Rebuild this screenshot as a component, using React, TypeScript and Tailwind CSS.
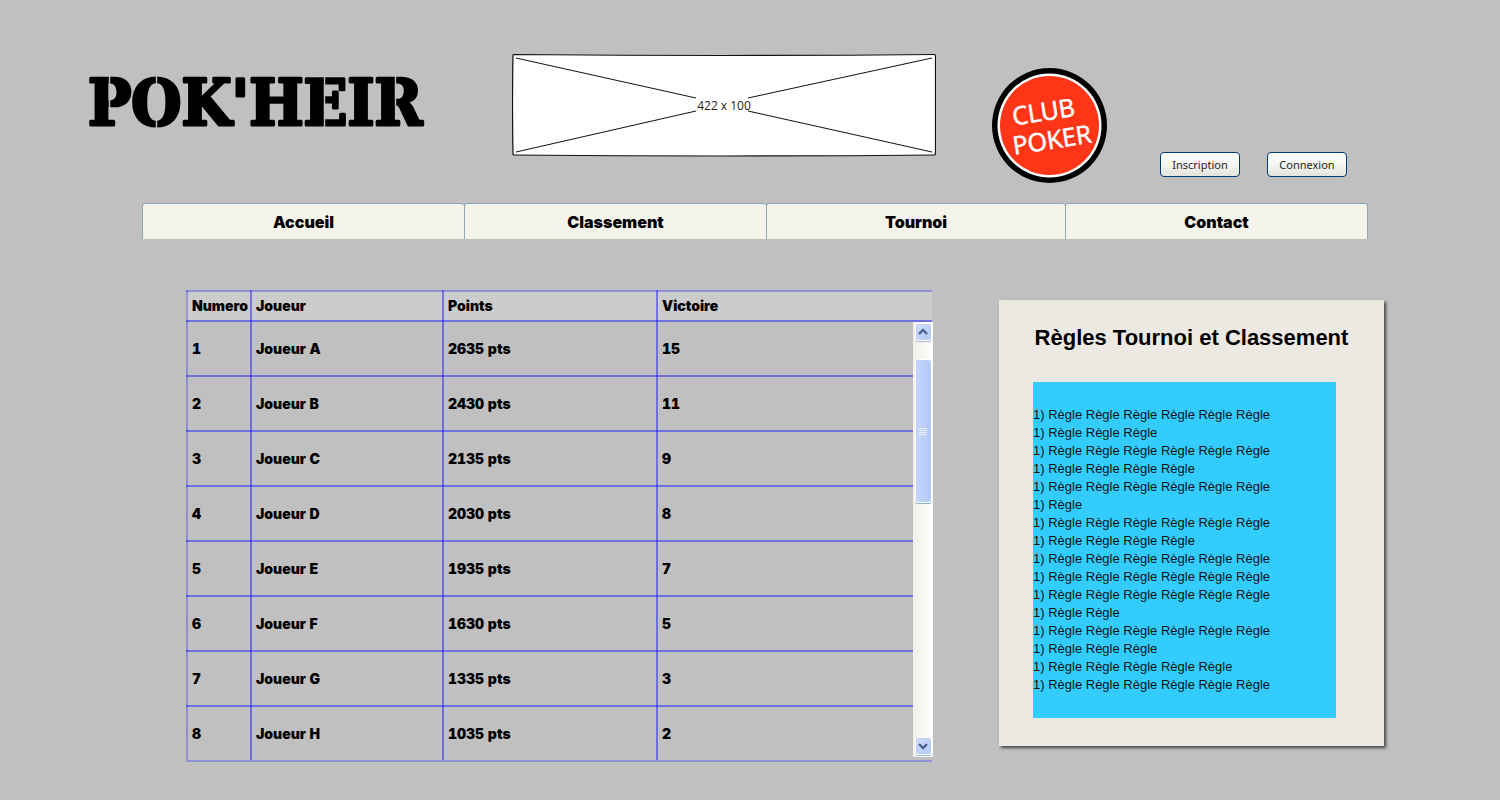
import React from "react";

const players = [
  { name: "Joueur A", points: 2635, wins: 15 },
  { name: "Joueur B", points: 2430, wins: 11 },
  { name: "Joueur C", points: 2135, wins: 9 },
  { name: "Joueur D", points: 2030, wins: 8 },
  { name: "Joueur E", points: 1935, wins: 7 },
  { name: "Joueur F", points: 1630, wins: 5 },
  { name: "Joueur G", points: 1335, wins: 3 },
  { name: "Joueur H", points: 1035, wins: 2 },
];

const ruleLengths = [6, 3, 6, 4, 6, 1, 6, 4, 6, 6, 6, 2, 6, 3, 5, 6];

const navItems = ["Accueil", "Classement", "Tournoi", "Contact"];

function Wordmark() {
  return (
    <svg width="344" height="80" viewBox="0 0 344 80" role="img" aria-label="POK'HEIR">
      <text
        x="0"
        y="65"
        stroke="#000"
        strokeWidth="3"
        strokeLinejoin="round"
        className="font-['DejaVu_Serif_Condensed','DejaVu_Serif',serif] text-[64px] font-bold"
      >
        POK'HEIR
      </text>
      {/* stencil cuts */}
      <path d="M21.5 14V50M68.5 14V68M236.5 14V68M307.5 14V46" stroke="#c0c0c0" strokeWidth="1.4" />
    </svg>
  );
}

function Banner() {
  return (
    <svg width="424" height="104" viewBox="0 0 424 104" role="img" aria-label="422 x 100">
      <path
        d="M2 1.5 Q212 3.5 422 1.5 Q423.5 1.5 423.5 3 L423.5 101 Q423.5 102 422 102 Q212 104 2 102 Q1 102 1 101 Q0 52 1 2.5 Q1 1.5 2 1.5 Z"
        fill="#fff"
        stroke="#111"
        strokeWidth="1.2"
      />
      <path d="M4 5 184 45 M236 45 420 5 M4 99 184 58 M236 58 420 99" stroke="#111" fill="none" />
      <text x="212" y="57" textAnchor="middle" className="fill-[#222] font-['Open_Sans',sans-serif] text-[12px]">
        422 x 100
      </text>
    </svg>
  );
}

function ClubLogo() {
  return (
    <svg width="116" height="116" viewBox="0 0 116 116" role="img" aria-label="Club Poker">
      <circle cx="57.5" cy="57.5" r="57.5" fill="#000" />
      <circle cx="57.5" cy="57.5" r="52" fill="#fff" />
      <circle cx="57.5" cy="57.5" r="49.5" fill="#ff3517" />
      <g
        transform="rotate(-9 57 57)"
        className="fill-white stroke-white font-['Open_Sans',sans-serif] text-[25px]"
        strokeWidth="0.6"
      >
        <text x="22" y="52">CLUB</text>
        <text x="18" y="81">POKER</text>
      </g>
    </svg>
  );
}

function HeaderButton({ children }: { children: React.ReactNode }) {
  return (
    <button
      type="button"
      className="h-[25px] w-20 rounded-[4px] border border-[#003c74] bg-linear-to-b from-white via-[#f6f6f2] to-[#e4e3db] font-['Noto_Sans',sans-serif] text-[11px] leading-4 text-[#222]"
    >
      {children}
    </button>
  );
}

function ScrollButton({ down = false }: { down?: boolean }) {
  return (
    <button
      type="button"
      aria-label={down ? "Descendre" : "Monter"}
      className="flex h-[18px] w-[17px] items-center justify-center rounded-[3px] border border-white bg-linear-to-br from-[#d3e0fe] to-[#aec8f7] shadow-[0_1px_0_#9db9dc,inset_0_0_0_1px_#bccff5]"
    >
      <svg width="10" height="8" viewBox="0 0 10 8">
        <path d={down ? "M1 2 5 6 9 2" : "M1 6 5 2 9 6"} fill="none" stroke="#4d6185" strokeWidth="2.4" />
      </svg>
    </button>
  );
}

function ScrollBar() {
  return (
    <div className="absolute top-8 right-0 bottom-[5px] flex w-5 flex-col items-center bg-linear-to-r from-[#f0efe8] to-[#fefefc] pt-px pb-0.5">
      <ScrollButton />
      <div className="h-[18px]" />
      <div className="flex h-[144px] w-[17px] flex-col items-center justify-center gap-px rounded-[3px] border border-white bg-linear-to-r from-[#c8d6fb] to-[#b0c9fa] shadow-[0_1px_0_#8fabd4,inset_0_0_0_1px_#bccff5]">
        {[0, 1, 2, 3].map((i) => (
          <div key={i} className="h-px w-2 bg-[#e6eefc]" />
        ))}
      </div>
      <div className="grow" />
      <ScrollButton down />
    </div>
  );
}

const cell =
  "border-l-2 border-[#0000ff6b] pt-0.5 pl-1 text-left whitespace-nowrap first:border-[#0000ff40]";

function Ranking() {
  return (
    <div className="relative pr-px">
      <table className="w-full table-fixed border-separate border-spacing-0 border-b-2 border-[#9090d4] font-['Inter',sans-serif] text-[14px] leading-5 font-black tabular-nums">
        <colgroup>
          <col className="w-16" />
          <col className="w-48" />
          <col className="w-[214px]" />
          <col />
        </colgroup>
        <thead>
          <tr className="h-[30px] bg-[#ccc] bg-[linear-gradient(#9090d4,#9090d4)] bg-[length:100%_2px] bg-no-repeat">
            {["Numero", "Joueur", "Points", "Victoire"].map((label) => (
              <th key={label} scope="col" className={`${cell} font-black`}>
                {label}
              </th>
            ))}
          </tr>
        </thead>
        <tbody>
          {players.map((p, i) => (
            <tr
              key={p.name}
              className="h-[55px] bg-[linear-gradient(#7070e0,#7070e0)] bg-[length:100%_2px] bg-no-repeat"
            >
              <td className={cell}>{i + 1}</td>
              <td className={cell}>{p.name}</td>
              <td className={cell}>{p.points} pts</td>
              <td className={cell}>{p.wins}</td>
            </tr>
          ))}
        </tbody>
      </table>
      <ScrollBar />
    </div>
  );
}

function Rules() {
  return (
    <section className="mt-2.5 bg-[#ece9e2] pt-6 pb-7 shadow-[2px_2px_3px_#444]">
      <h2 className="text-center text-[22px] leading-7 font-bold whitespace-nowrap">
        Règles Tournoi et Classement
      </h2>
      <div className="mt-[30px] mr-12 ml-[34px] bg-[#33ccff] py-6 text-[13px] leading-[18px] text-[#111]">
        {ruleLengths.map((n, i) => (
          <p key={i}>1) {Array(n).fill("Règle").join(" ")}</p>
        ))}
      </div>
    </section>
  );
}

export default function App() {
  return (
    <div className="min-h-screen bg-[#c0c0c0] pb-[38px] font-['Liberation_Sans',Arial,sans-serif] text-black">
      <header className="grid h-[203px] grid-cols-[512fr_480fr_168fr_340fr] items-start">
        <h1 className="mt-[60px] pl-[88px]">
          <Wordmark />
        </h1>
        <div className="mt-[53px]">
          <Banner />
        </div>
        <div className="mt-[68px]">
          <ClubLogo />
        </div>
        <div className="mt-[152px] flex gap-[27px]">
          <HeaderButton>Inscription</HeaderButton>
          <HeaderButton>Connexion</HeaderButton>
        </div>
      </header>

      <nav className="mr-[132px] ml-[142px] grid grid-cols-[322fr_302fr_299fr_303fr] font-['Inter',sans-serif] text-[16px] font-black">
        {navItems.map((item) => (
          <a
            key={item}
            href="#"
            className="flex h-9 items-center justify-center rounded-t-[3px] border-t border-l border-[#8ea5b5] bg-[#f4f4eb] pt-px last:border-r"
          >
            {item}
          </a>
        ))}
      </nav>

      <main className="mt-[51px] grid grid-cols-[minmax(0,747fr)_minmax(0,385fr)] items-start gap-[66px] pr-[116px] pl-[186px]">
        <Ranking />
        <Rules />
      </main>
    </div>
  );
}
